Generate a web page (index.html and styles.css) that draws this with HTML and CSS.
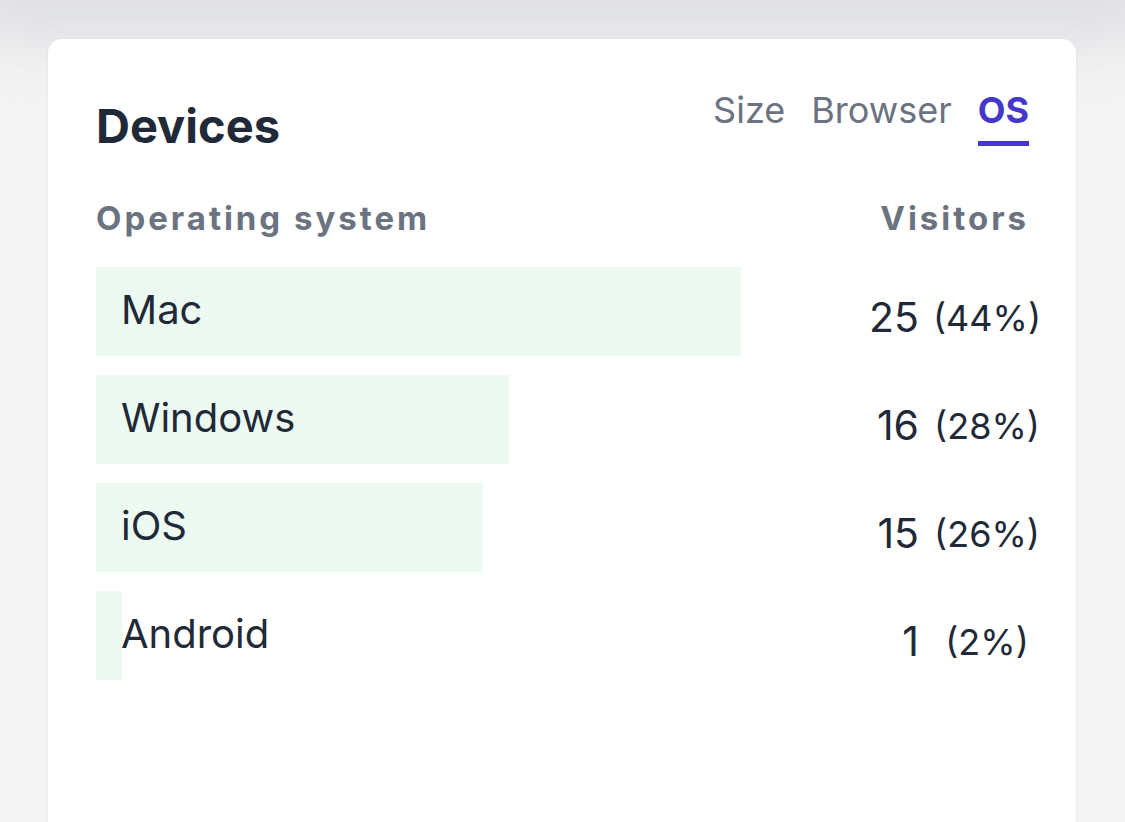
FILE: index.html
```html
<!DOCTYPE html>
<html>
<head>
<meta charset="utf-8">
<link rel="stylesheet" href="styles.css">
</head>
<body>
<div class="topshade"></div>
<section class="card">
  <header class="card-head">
    <h2 class="title">Devices</h2>
    <nav class="tabs">
      <span class="tab">Size</span>
      <span class="tab">Browser</span>
      <span class="tab active">OS</span>
    </nav>
  </header>
  <div class="cols">
    <span>Operating system</span>
    <span>Visitors</span>
  </div>
  <div class="rows">
    <div class="row">
      <div class="track"><div class="bar" style="width:100%"></div><span class="label">Mac</span></div>
      <div class="value"><span class="count">25</span><span class="pct">(44%)</span></div>
    </div>
    <div class="row">
      <div class="track"><div class="bar" style="width:64%"></div><span class="label">Windows</span></div>
      <div class="value"><span class="count">16</span><span class="pct">(28%)</span></div>
    </div>
    <div class="row">
      <div class="track"><div class="bar" style="width:60%"></div><span class="label">iOS</span></div>
      <div class="value"><span class="count">15</span><span class="pct">(26%)</span></div>
    </div>
    <div class="row">
      <div class="track"><div class="bar" style="width:4%"></div><span class="label">Android</span></div>
      <div class="value"><span class="count">1</span><span class="pct">(2%)</span></div>
    </div>
  </div>
</section>
</body>
</html>
```

FILE: styles.css
```css
* { box-sizing: border-box; }
html, body { margin: 0; padding: 0; }
body {
  width: 1125px;
  height: 822px;
  overflow: hidden;
  background: #f4f4f5;
  font-family: Inter, "Noto Sans", sans-serif;
  color: #1f2937;
  position: relative;
}
.topshade {
  position: absolute;
  left: -40px; right: -40px; top: -60px;
  height: 105px;
  background: #dfe0e3;
  filter: blur(30px);
  border-radius: 40px;
}
.card {
  position: relative;
  margin: 39px 0 0 48px;
  width: 1028px;
  height: 820px;
  background: #fff;
  border-radius: 14px;
  box-shadow: 0 1px 4px rgba(0,0,0,0.05);
  padding: 53px 47px 0 48px;
}
.card-head {
  display: flex;
  justify-content: space-between;
  align-items: flex-start;
}
.title {
  margin: 10px 0 0 0;
  font-size: 47px;
  line-height: 1;
  font-weight: 700;
  color: #1f2937;
}
.tabs {
  display: flex;
  gap: 26px;
  font-size: 36px;
  line-height: 1;
  color: #6b7280;
}
.tab { padding-bottom: 13px; border-bottom: 5px solid transparent; }
.tab.active {
  color: #4338ca;
  font-weight: 700;
  border-bottom-color: #4338ca;
}
.cols {
  display: flex;
  justify-content: space-between;
  margin-top: 53px;
  font-size: 33px;
  line-height: 1;
  font-weight: 700;
  letter-spacing: 0.09em;
  color: #6b7280;
}
.rows {
  margin-top: 32px;
  display: flex;
  flex-direction: column;
  gap: 19px;
}
.row {
  display: flex;
  height: 89px;
  margin-right: -14px;
}
.track {
  position: relative;
  flex: 0 0 645px;
  display: flex;
  align-items: center;
}
.bar {
  position: absolute;
  left: 0; top: 0; bottom: 0;
  background: #ecfaf2;
}
.label {
  position: relative;
  padding-left: 25px;
  padding-bottom: 4px;
  font-size: 40px;
  line-height: 1;
}
.value {
  flex: 1;
  display: flex;
  align-items: center;
  padding-top: 12px;
}
.count {
  flex: 1;
  text-align: right;
  font-size: 41px;
  line-height: 1;
}
.pct {
  width: 112px;
  margin-left: 12px;
  text-align: center;
  font-size: 36px;
  line-height: 1;
}
```
